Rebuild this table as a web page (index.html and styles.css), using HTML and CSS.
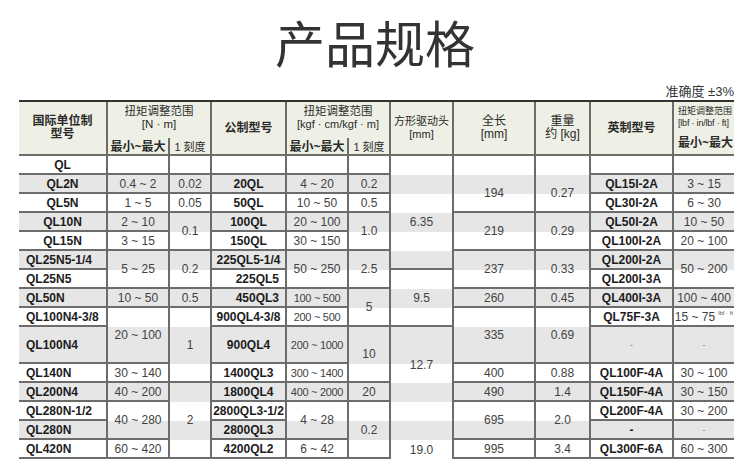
FILE: index.html
```html
<!DOCTYPE html>
<html lang="zh">
<head>
<meta charset="utf-8">
<title>产品规格</title>
<link rel="stylesheet" href="styles.css">
</head>
<body>
<h1 class="title">产品规格</h1>
<div class="note">准确度 ±3%</div>
<div class="spec">
  <div class="thead">
    <div class="c first hb r2 h2l">国际单位制<br>型号</div>
    <div class="c s2 nb grp"><span class="gl">扭矩调整范围</span><span class="gl">[N · m]</span></div>
    <div class="c hb r2">公制型号</div>
    <div class="c s2 nb grp"><span class="gl">扭矩调整范围</span><span class="gl kgf">[kgf · cm/kgf · m]</span></div>
    <div class="c r2 h2l small">方形驱动头<br>[mm]</div>
    <div class="c r2 h2l">全长<br>[mm]</div>
    <div class="c r2 h2l">重量<br>约 [kg]</div>
    <div class="c hb r2">英制型号</div>
    <div class="c r2 lastcol">
      <span class="tiny1">扭矩调整范围</span>
      <span class="tiny2">[lbf · in/lbf · ft]</span>
      <span class="sub hb">最小~最大</span>
    </div>
    <div class="c hb sub">最小~最大</div>
    <div class="c sub one">1 刻度</div>
    <div class="c hb sub">最小~最大</div>
    <div class="c sub one">1 刻度</div>
  </div>
  <div class="tbody">
    <!-- row 0 -->
    <div class="c first m">QL</div>
    <div class="c"></div><div class="c"></div><div class="c"></div><div class="c"></div><div class="c"></div>
    <div class="c nb"></div><div class="c nb"></div><div class="c nb"></div>
    <div class="c"></div><div class="c"></div>
    <!-- row 1 -->
    <div class="c first m">QL2N</div>
    <div class="c n">0.4 ~ 2</div>
    <div class="c n">0.02</div>
    <div class="c m">20QL</div>
    <div class="c n">4 ~ 20</div>
    <div class="c n">0.2</div>
    <div class="c n r5">6.35</div>
    <div class="c n r2">194</div>
    <div class="c n r2">0.27</div>
    <div class="c m">QL15I-2A</div>
    <div class="c n">3 ~ 15</div>
    <!-- row 2 -->
    <div class="c first m">QL5N</div>
    <div class="c n">1 ~ 5</div>
    <div class="c n">0.05</div>
    <div class="c m">50QL</div>
    <div class="c n">10 ~ 50</div>
    <div class="c n">0.5</div>
    <div class="c m">QL30I-2A</div>
    <div class="c n">6 ~ 30</div>
    <!-- row 3 -->
    <div class="c first m">QL10N</div>
    <div class="c n">2 ~ 10</div>
    <div class="c n r2">0.1</div>
    <div class="c m">100QL</div>
    <div class="c n">20 ~ 100</div>
    <div class="c n r2">1.0</div>
    <div class="c n r2">219</div>
    <div class="c n r2">0.29</div>
    <div class="c m">QL50I-2A</div>
    <div class="c n">10 ~ 50</div>
    <!-- row 4 -->
    <div class="c first m">QL15N</div>
    <div class="c n">3 ~ 15</div>
    <div class="c m">150QL</div>
    <div class="c n">30 ~ 150</div>
    <div class="c m">QL100I-2A</div>
    <div class="c n">20 ~ 100</div>
    <!-- row 5 -->
    <div class="c first m l">QL25N5-1/4</div>
    <div class="c n r2">5 ~ 25</div>
    <div class="c n r2">0.2</div>
    <div class="c m">225QL5-1/4</div>
    <div class="c n r2">50 ~ 250</div>
    <div class="c n r2">2.5</div>
    <div class="c n r2">237</div>
    <div class="c n r2">0.33</div>
    <div class="c m">QL200I-2A</div>
    <div class="c n r2">50 ~ 200</div>
    <!-- row 6 -->
    <div class="c first m l">QL25N5</div>
    <div class="c m rt">225QL5</div>
    <div class="c n r3">9.5</div>
    <div class="c m">QL200I-3A</div>
    <!-- row 7 -->
    <div class="c first m l">QL50N</div>
    <div class="c n">10 ~ 50</div>
    <div class="c n">0.5</div>
    <div class="c m rt">450QL3</div>
    <div class="c n nn">100 ~ 500</div>
    <div class="c n r2">5</div>
    <div class="c n">260</div>
    <div class="c n">0.45</div>
    <div class="c m">QL400I-3A</div>
    <div class="c n">100 ~ 400</div>
    <!-- row 8 -->
    <div class="c first m l">QL100N4-3/8</div>
    <div class="c n r2">20 ~ 100</div>
    <div class="c n r3">1</div>
    <div class="c m">900QL4-3/8</div>
    <div class="c n nn">200 ~ 500</div>
    <div class="c n r2">335</div>
    <div class="c n r2">0.69</div>
    <div class="c m">QL75F-3A</div>
    <div class="c n">15 ~ 75<span class="unit">lbf · ft</span></div>
    <!-- row 9 -->
    <div class="c first m l">QL100N4</div>
    <div class="c m">900QL4</div>
    <div class="c n nn">200 ~ 1000</div>
    <div class="c n r2">10</div>
    <div class="c n r3 nb">12.7</div>
    <div class="c dash">-</div>
    <div class="c dash">-</div>
    <!-- row 10 -->
    <div class="c first m l">QL140N</div>
    <div class="c n">30 ~ 140</div>
    <div class="c m">1400QL3</div>
    <div class="c n nn">300 ~ 1400</div>
    <div class="c n">400</div>
    <div class="c n">0.88</div>
    <div class="c m">QL100F-4A</div>
    <div class="c n">30 ~ 100</div>
    <!-- row 11 -->
    <div class="c first m l">QL200N4</div>
    <div class="c n">40 ~ 200</div>
    <div class="c n r4">2</div>
    <div class="c m">1800QL4</div>
    <div class="c n nn">400 ~ 2000</div>
    <div class="c n">20</div>
    <div class="c n">490</div>
    <div class="c n">1.4</div>
    <div class="c m">QL150F-4A</div>
    <div class="c n">30 ~ 150</div>
    <!-- row 12 -->
    <div class="c first m l">QL280N-1/2</div>
    <div class="c n r2">40 ~ 280</div>
    <div class="c m">2800QL3-1/2</div>
    <div class="c n r2">4 ~ 28</div>
    <div class="c n r3">0.2</div>
    <div class="c r2 nb"></div>
    <div class="c n r2">695</div>
    <div class="c n r2">2.0</div>
    <div class="c m">QL200F-4A</div>
    <div class="c n">30 ~ 200</div>
    <!-- row 13 -->
    <div class="c first m l">QL280N</div>
    <div class="c m">2800QL3</div>
    <div class="c m">-</div>
    <div class="c dash">-</div>
    <!-- row 14 -->
    <div class="c first m l">QL420N</div>
    <div class="c n">60 ~ 420</div>
    <div class="c m">4200QL2</div>
    <div class="c n">6 ~ 42</div>
    <div class="c n nb">19.0</div>
    <div class="c n">995</div>
    <div class="c n">3.4</div>
    <div class="c m">QL300F-6A</div>
    <div class="c n">60 ~ 300</div>
  </div>
</div>
</body>
</html>
```
FILE: styles.css
```css
* { box-sizing: border-box; }

body {
  margin: 0;
  background: #ffffff;
  font-family: "Liberation Sans", "Noto Sans CJK SC", sans-serif;
  color: #333333;
}

.title {
  margin: 0;
  height: 85px;
  padding-top: 13px;
  font-family: "Noto Sans CJK SC", sans-serif;
  font-weight: 400;
  font-size: 50px;
  line-height: 56px;
  text-align: center;
  color: #333333;
}

.note {
  width: 715px;
  margin-left: 19px;
  height: 15px;
  font-size: 13px;
  line-height: 14px;
  text-align: right;
  color: #333333;
}

.spec {
  width: 715px;
  margin-left: 19px;
  border-top: 2px solid #333333;
}

.thead,
.tbody {
  display: grid;
  grid-template-columns: 87px 62px 42px 75px 62px 42px 63px 82px 55px 83px 62px;
}

.thead {
  grid-template-rows: 36px 18px;
  background: #eef0e5;
  color: #2a2a2a;
}

.tbody {
  grid-template-rows: repeat(9, 19px) 37px repeat(5, 19px);
  background: linear-gradient(to bottom,
    transparent 0 19px, #e6e6e6 19px 38px,
    transparent 38px 57px, #e6e6e6 57px 76px,
    transparent 76px 95px, #e6e6e6 95px 114px,
    transparent 114px 133px, #e6e6e6 133px 152px,
    transparent 152px 171px, #e6e6e6 171px 208px,
    transparent 208px 227px, #e6e6e6 227px 246px,
    transparent 246px 265px, #e6e6e6 265px 284px,
    transparent 284px);
}

.c {
  display: flex;
  align-items: center;
  justify-content: center;
  text-align: center;
  white-space: nowrap;
  border-left: 2px solid #6c6c6c;
  border-bottom: 2px solid #6c6c6c;
  font-size: 12px;
  line-height: 14px;
}

.first { border-left: none; }
.nb { border-bottom: none; }

.r2 { grid-row: span 2; }
.r3 { grid-row: span 3; }
.r4 { grid-row: span 4; }
.r5 { grid-row: span 5; }
.s2 { grid-column: span 2; }

.m {
  font-weight: 700;
  color: #1c1c1c;
}

.n { color: #424242; }

.nn {
  font-size: 11px;
  letter-spacing: -0.3px;
}

.l {
  justify-content: flex-start;
  padding-left: 7px;
}

.rt {
  justify-content: flex-end;
  padding-right: 6px;
}

.dash {
  color: #9a9a9a;
  font-size: 10px;
}

.unit {
  font-size: 6px;
  line-height: 6px;
  align-self: flex-start;
  margin-top: 2px;
  margin-left: 3px;
  color: #555555;
}

/* header */
.hb { font-weight: 700; }

.h2l { line-height: 13px; }

.grp {
  flex-direction: column;
  justify-content: flex-start;
  padding-top: 3px;
}

.gl {
  display: block;
  font-size: 11.5px;
  line-height: 13px;
  height: 13px;
}

.kgf { font-size: 11px; }

.small { font-size: 11px; }

.sub { line-height: 14px; padding-top: 2px; }

.one { font-size: 11px; }

.lastcol {
  flex-direction: column;
  align-items: flex-start;
  justify-content: flex-start;
  padding-left: 4px;
  padding-top: 4px;
}

.tiny1 {
  font-size: 9px;
  line-height: 11px;
}

.tiny2 {
  font-size: 9px;
  line-height: 12px;
  letter-spacing: -0.2px;
}

.lastcol .sub {
  margin-top: 6px;
  font-size: 12px;
  line-height: 16px;
  padding-top: 0;
}
```
